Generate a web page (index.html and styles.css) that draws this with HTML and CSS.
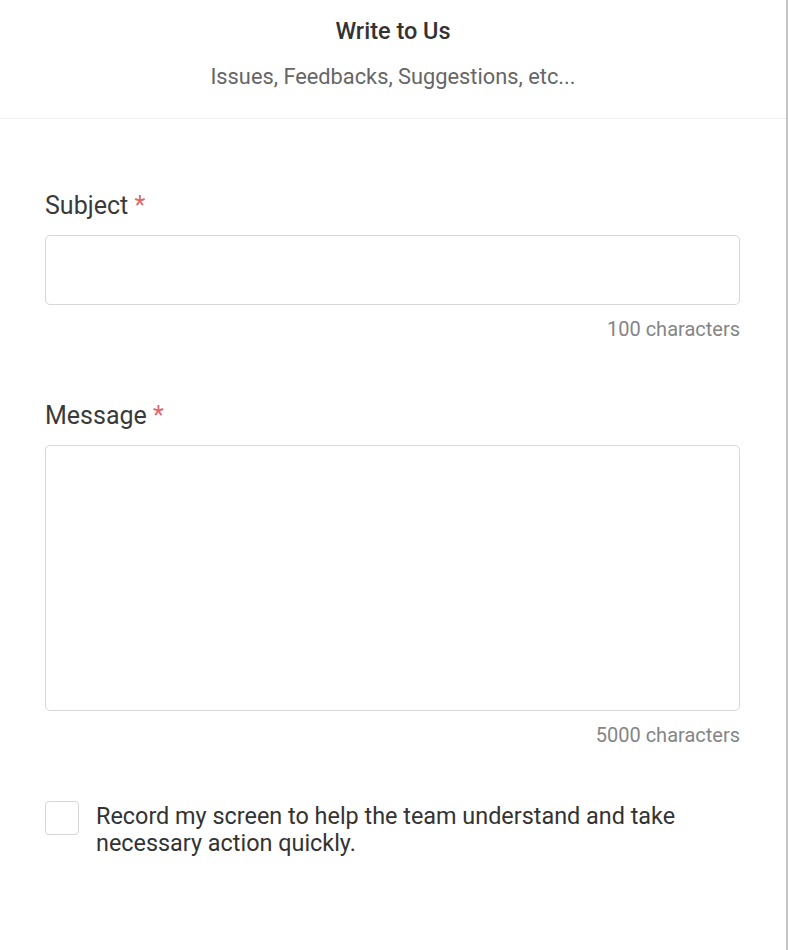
FILE: index.html
```html
<!DOCTYPE html>
<html lang="en">
<head>
   <meta charset="UTF-8">
   <meta name="viewport" content="width=device-width, initial-scale=1.0">
   <title>Write to Us</title>
   <link rel="stylesheet" href="styles.css">
</head>
<body>
   <div class="pagina">
       <div class="cabecera">
           <h1>Write to Us</h1>
           <p>Issues, Feedbacks, Suggestions, etc...</p>
       </div>

       <form class="formulario">
           <div class="campo">
               <label for="asunto">Subject <span class="requerido">*</span></label>
               <input type="text" id="asunto" maxlength="100">
               <div class="contador">100 characters</div>
           </div>

           <div class="campo">
               <label for="mensaje">Message <span class="requerido">*</span></label>
               <textarea id="mensaje" maxlength="5000"></textarea>
               <div class="contador">5000 characters</div>
           </div>

           <label class="grabar">
               <input type="checkbox" id="grabarPantalla">
               <span class="caja"></span>
               <span class="texto">Record my screen to help the team understand and take necessary action quickly.</span>
           </label>
       </form>
   </div>
</body>
</html>
```

FILE: styles.css
```css
* {
    box-sizing: border-box;
}
body {
    margin: 0;
    font-family: Roboto, "Liberation Sans", Arial, sans-serif;
    background-color: #ffffff;
    color: #333;
}
.pagina {
    width: 788px;
    min-height: 950px;
    border-right: 2px solid #c4c4c4; /* borde del panel */
}
.cabecera {
    height: 119px;
    border-bottom: 1px solid #efefef;
    text-align: center;
    padding-top: 17px;
}
.cabecera h1 {
    margin: 0;
    font-size: 23.5px;
    font-weight: 500;
    line-height: 28px;
    color: #333;
}
.cabecera p {
    margin: 19px 0 0;
    font-size: 21.8px;
    line-height: 26px;
    color: #666;
}
.formulario {
    padding: 72px 46px 0 45px;
}
.campo {
    display: flex;
    flex-direction: column;
}
.campo label {
    font-size: 25px;
    line-height: 30px;
    color: #3a3a3a;
    margin-bottom: 14px;
}
.requerido {
    color: #e06666;
}
.campo input, .campo textarea {
    width: 100%;
    border: 1px solid #d8d8d8;
    border-radius: 5px;
    font-family: inherit;
    font-size: 20px;
    padding: 10px;
    resize: none;
    outline: none;
}
.campo input {
    height: 70px;
}
.campo textarea {
    height: 266px;
}
.contador {
    text-align: right;
    font-size: 20px;
    line-height: 24px;
    color: #858585;
    margin-top: 12px;
    margin-bottom: 60px;
}
.campo:last-of-type .contador {
    margin-bottom: 54px;
}
.grabar {
    display: flex;
    gap: 17px;
    align-items: flex-start;
    font-size: 23.4px;
    line-height: 27px;
    color: #333;
    cursor: pointer;
    padding-right: 50px;
}
.grabar input {
    display: none;
}
.caja {
    flex: 0 0 34px;
    height: 34px;
    border: 1px solid #d6d6d6;
    border-radius: 4px;
}
.texto {
    margin-top: 2px;
}
```
